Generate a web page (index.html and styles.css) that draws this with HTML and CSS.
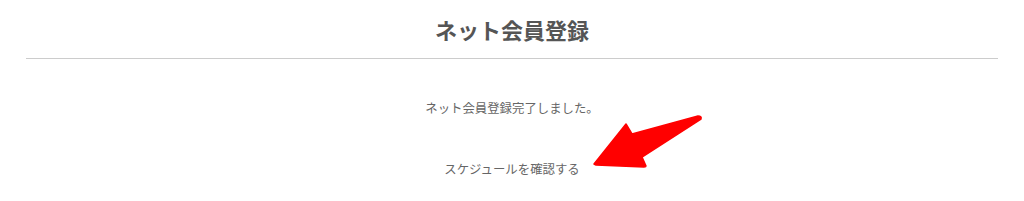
FILE: index.html
```
<!DOCTYPE html>
<html lang="ja">
<head>
<meta charset="utf-8">
<link rel="stylesheet" href="styles.css">
</head>
<body>
<div class="page">
  <h1 class="title">ネット会員登録</h1>
  <div class="content">
    <p class="message">ネット会員登録完了しました。</p>
    <p class="link-row"><a class="link" href="#">スケジュールを確認する</a></p>
    <svg class="arrow" width="120" height="60" viewBox="0 0 120 60" aria-hidden="true">
      <path d="M4 55 L36 15 L42 25 L108 7 Q112 7 111 10 L52 48 L56 57 Q56 58 54 58 L6 56 Z" fill="#ff0000" stroke="#ff0000" stroke-width="1.5" stroke-linejoin="round"/>
    </svg>
  </div>
</div>
</body>
</html>
```
FILE: styles.css
```
html, body {
  margin: 0;
  padding: 0;
  background: #fff;
}
body {
  font-family: "Noto Sans CJK JP", "Noto Sans", sans-serif;
  color: #666;
}
.page {
  padding: 0 26px;
}
.title {
  margin: 0;
  padding-top: 14px;
  height: 59px;
  box-sizing: border-box;
  border-bottom: 1px solid #cccccc;
  text-align: center;
  font-size: 22px;
  font-weight: 700;
  line-height: 30px;
  color: #555;
}
.content {
  position: relative;
  text-align: center;
}
.message {
  margin: 0;
  padding-top: 39px;
  font-size: 12.4px;
  line-height: 20px;
}
.link-row {
  margin: 0;
  padding-top: 41px;
  font-size: 12.4px;
  line-height: 20px;
}
.link {
  color: #666;
  text-decoration: none;
}
.arrow {
  position: absolute;
  left: 564px;
  top: 50px;
}
```
